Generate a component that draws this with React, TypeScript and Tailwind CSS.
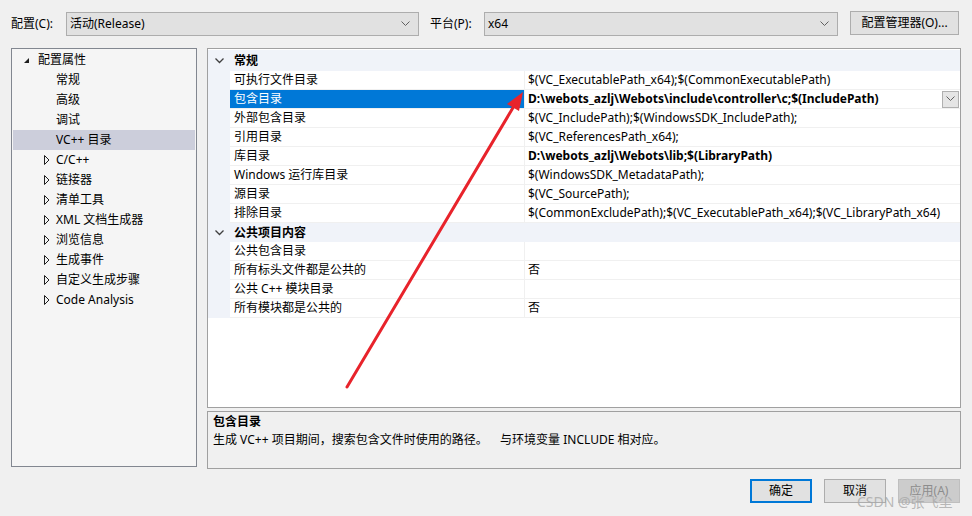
import React from "react";

const font = { fontFamily: '"Noto Sans", "Noto Sans CJK SC", sans-serif' };

const Chevron = ({ className = "" }: { className?: string }) => (
  <svg width="9" height="6" viewBox="0 0 9 6" className={className}>
    <path d="M0.5 0.5 L4.5 4.5 L8.5 0.5" fill="none" stroke="#606060" strokeWidth="1" />
  </svg>
);

const Combo = ({ text, w }: { text: string; w: string }) => (
  <div className={`${w} h-[24px] bg-[#e1e1e1] border border-[#adadad] flex items-center pl-[3px] pr-[8px]`}>
    <span className="flex-1 text-[12px] text-black">{text}</span>
    <Chevron />
  </div>
);

const treeItems = [
  { label: "常规", arrow: false },
  { label: "高级", arrow: false },
  { label: "调试", arrow: false },
  { label: "VC++ 目录", arrow: false, selected: true },
  { label: "C/C++", arrow: true },
  { label: "链接器", arrow: true },
  { label: "清单工具", arrow: true },
  { label: "XML 文档生成器", arrow: true },
  { label: "浏览信息", arrow: true },
  { label: "生成事件", arrow: true },
  { label: "自定义生成步骤", arrow: true },
  { label: "Code Analysis", arrow: true },
];

type Row = { name: string; value: string; bold?: boolean; selected?: boolean };

const general: Row[] = [
  { name: "可执行文件目录", value: "$(VC_ExecutablePath_x64);$(CommonExecutablePath)" },
  { name: "包含目录", value: "D:\\webots_azlj\\Webots\\include\\controller\\c;$(IncludePath)", bold: true, selected: true },
  { name: "外部包含目录", value: "$(VC_IncludePath);$(WindowsSDK_IncludePath);" },
  { name: "引用目录", value: "$(VC_ReferencesPath_x64);" },
  { name: "库目录", value: "D:\\webots_azlj\\Webots\\lib;$(LibraryPath)", bold: true },
  { name: "Windows 运行库目录", value: "$(WindowsSDK_MetadataPath);" },
  { name: "源目录", value: "$(VC_SourcePath);" },
  { name: "排除目录", value: "$(CommonExcludePath);$(VC_ExecutablePath_x64);$(VC_LibraryPath_x64)" },
];

const shared: Row[] = [
  { name: "公共包含目录", value: "" },
  { name: "所有标头文件都是公共的", value: "否" },
  { name: "公共 C++ 模块目录", value: "" },
  { name: "所有模块都是公共的", value: "否" },
];

const GroupHeader = ({ title, h }: { title: string; h: string }) => (
  <div className={`flex ${h} bg-[#f0f3f9] items-center`}>
    <div className="w-[22px] flex justify-center">
      <svg width="9" height="6" viewBox="0 0 9 6">
        <path d="M0.5 0.5 L4.5 4.5 L8.5 0.5" fill="none" stroke="#404040" strokeWidth="1.3" />
      </svg>
    </div>
    <span className="pl-[4px] text-[12px] font-bold text-black">{title}</span>
  </div>
);

const PropRow = ({ row }: { row: Row }) => (
  <div className="flex h-[19px]">
    <div className="w-[22px] bg-[#f0f3f9]" />
    <div
      className={`w-[294px] flex items-center pl-[4px] text-[12px] border-b border-[#f0f0f0] ${
        row.selected ? "bg-[#0078d7] text-white border-[#0078d7]" : "bg-white text-black"
      }`}
    >
      {row.name}
    </div>
    <div className="flex-1 flex items-center bg-white border-l border-b border-[#f0f0f0] pl-[3px]">
      <span className={`flex-1 text-[12px] text-black whitespace-nowrap ${row.bold ? "font-bold" : ""}`}>{row.value}</span>
      {row.selected && (
        <div className="w-[17px] h-[17px] mr-px bg-[#e5e5e5] border border-[#b0b0b0] flex items-center justify-center">
          <Chevron />
        </div>
      )}
    </div>
  </div>
);

export default function App() {
  return (
    <div className="relative w-[972px] h-[516px] bg-[#f0f0f0] overflow-hidden text-black" style={font}>
      {/* top bar */}
      <div className="flex items-center pt-[12px] pl-[11px]">
        <span className="w-[55px] text-[12px]">配置(C):</span>
        <Combo text="活动(Release)" w="w-[353px]" />
        <span className="ml-[11px] w-[54px] text-[12px]">平台(P):</span>
        <Combo text="x64" w="w-[354px]" />
        <button className="ml-[12px] -mt-[2px] w-[109px] h-[24px] bg-[#e1e1e1] border border-[#adadad] text-[12px]">
          配置管理器(O)...
        </button>
      </div>

      {/* main */}
      <div className="flex mt-[12px] pl-[11px]">
        <div className="w-[186px] h-[419px] bg-[#f5f5f5] border border-[#828790] pt-[1px] px-px">
          <div className="flex items-center h-[20px]">
            <svg width="7" height="7" viewBox="0 0 7 7" className="ml-[10px]">
              <path d="M6 1 L6 6 L1 6 Z" fill="#1e1e1e" />
            </svg>
            <span className="ml-[8px] text-[12px]">配置属性</span>
          </div>
          {treeItems.map((it) => (
            <div
              key={it.label}
              className={`flex items-center h-[20px] ${it.selected ? "bg-[#cccedb]" : ""}`}
            >
              <div className="w-[43px] flex justify-end pr-[6px]">
                {it.arrow && (
                  <svg width="6" height="10" viewBox="0 0 6 10">
                    <path d="M0.5 0.5 L5 5 L0.5 9.5 Z" fill="none" stroke="#1e1e1e" strokeWidth="1" />
                  </svg>
                )}
              </div>
              <span className="text-[12px]">{it.label}</span>
            </div>
          ))}
        </div>

        <div className="ml-[10px] w-[754px] flex flex-col">
          <div className="h-[360px] bg-white border border-[#a0a0a0] pt-px">
            <GroupHeader title="常规" h="h-[21px]" />
            {general.map((r) => (
              <PropRow key={r.name} row={r} />
            ))}
            <GroupHeader title="公共项目内容" h="h-[19px]" />
            {shared.map((r) => (
              <PropRow key={r.name} row={r} />
            ))}
          </div>
          <div className="mt-[3px] h-[58px] bg-[#f0f0f0] border border-[#a0a0a0] px-[5px] pt-[1px]">
            <div className="text-[12px] font-bold leading-[18px]">包含目录</div>
            <div className="text-[12px] leading-[18px] whitespace-pre">
              生成 VC++ 项目期间，搜索包含文件时使用的路径。    与环境变量 INCLUDE 相对应。
            </div>
          </div>
        </div>
      </div>

      {/* buttons */}
      <div className="flex justify-end gap-[12px] pr-[12px] mt-[10px]">
        <button className="w-[62px] h-[24px] bg-[#e1e1e1] border-2 border-[#0078d7] text-[12px]">确定</button>
        <button className="w-[62px] h-[24px] bg-[#e1e1e1] border border-[#adadad] text-[12px]">取消</button>
        <button className="w-[62px] h-[24px] bg-[#cccccc] border border-[#bfbfbf] text-[12px] text-[#8c8c8c]">应用(A)</button>
      </div>

      {/* watermark */}
      <div className="absolute left-[857px] top-[491px] text-[14px] text-[#a8a8a8]/80 pointer-events-none">
        CSDN @张飞尘
      </div>

      {/* red arrow annotation */}
      <svg className="absolute left-0 top-0 pointer-events-none" width="972" height="516">
        <line x1="347" y1="387" x2="514" y2="106" stroke="#e8232b" strokeWidth="3" strokeLinecap="round" />
        <polygon points="523,92 519,111 507,104" fill="#e8232b" />
      </svg>
    </div>
  );
}
